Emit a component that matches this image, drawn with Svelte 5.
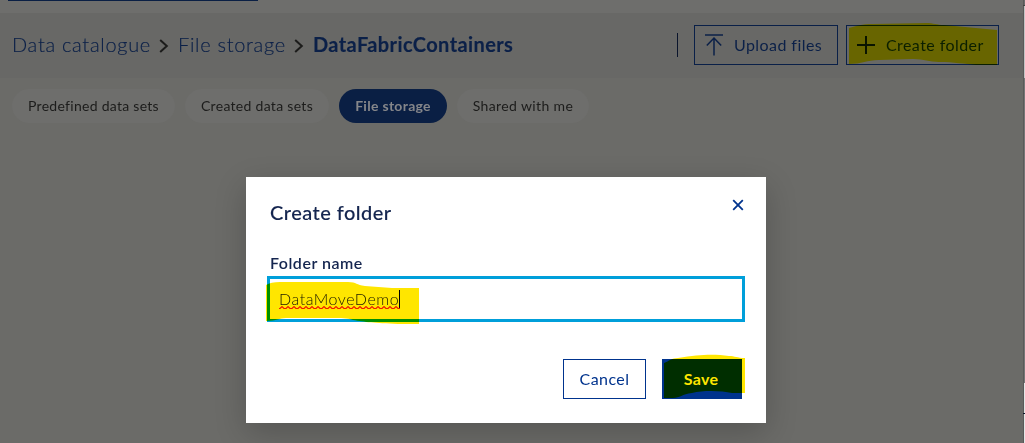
<script lang="ts">
  const tabs = [
    { label: 'Predefined data sets', width: 163, ls: 0.28 },
    { label: 'Created data sets', width: 144, ls: 0.3 },
    { label: 'File storage', width: 108, ls: 0.3, active: true },
    { label: 'Shared with me', width: 132, ls: 0.38 },
  ];
  let folder = $state('DataMoveDemo');
</script>

<div class="page">
  <div class="top"><div class="topline"></div></div>
  <header>
    <nav>
      <span class="c1">Data catalogue</span>
      <svg class="chev" width="10" height="16" viewBox="0 0 10 16"><path d="M1.2 2 7.8 8 1.2 14" /></svg>
      <span class="c2">File storage</span>
      <svg class="chev" width="10" height="16" viewBox="0 0 10 16"><path d="M1.2 2 7.8 8 1.2 14" /></svg>
      <span class="c3">DataFabricContainers</span>
    </nav>
    <div class="actions">
      <i class="sep"></i>
      <div class="btn upload">
        <svg width="18" height="22" viewBox="0 0 18 22"><path d="M0 1H18M9 3.5V21.5M1.8 11.5 9 4 16.2 11.5" /></svg>
        <span>Upload files</span>
      </div>
      <div class="btn create">
        <svg width="18" height="18" viewBox="0 0 18 18"><path d="M0 9H18M9 0V18" /></svg>
        <span>Create folder</span>
        <svg class="mark m1" width="150" height="44" viewBox="0 0 150 44"><path d="M0 5C8 3 12 1 24 1L77 0C85 0 88 2 95 2L148 7V42H127C115 41 105 39 90 39C80 39 75 36 64 36L30 37C18 37 13 41 0 41Z" /></svg>
      </div>
    </div>
  </header>
  <div class="tabs">
    {#each tabs as t}
      <div class="tab" class:active={t.active} style="width:{t.width}px;letter-spacing:{t.ls}px">{t.label}</div>
    {/each}
  </div>
  <div class="edge"><i></i><b></b></div>
  <div class="modal">
    <div class="head">
      <h1>Create folder</h1>
      <svg class="close" width="12" height="12" viewBox="0 0 12 12"><path d="M1.2 1.2 10.8 10.8M10.8 1.2 1.2 10.8" /></svg>
    </div>
    <div class="label"><span>Folder name</span></div>
    <div class="field">
      <span class="value">{folder}<svg class="wave" width="121" height="3" viewBox="0 0 121 3"><defs><pattern id="w" width="6" height="3" patternUnits="userSpaceOnUse"><path d="M0 2.5 1 2.5 3 .6 5 2.5 6 2.5" /></pattern></defs><rect width="121" height="3" fill="url(#w)" /></svg></span><i class="caret"></i>
      <svg class="mark m2" width="153" height="42" viewBox="0 0 153 42"><path d="M0 3C3 1 8 0 14 0H82C91 0 90 3 99 4L126 6H153V42H132C108 41 99 40 87 38C81 36 75 36 66 36H20C13 36 11 39 0 39Z" /></svg>
    </div>
    <div class="foot">
      <div class="mb cancel"><span>Cancel</span></div>
      <div class="mb save"><span>Save</span>
        <svg class="mark m3" width="82" height="44" viewBox="0 0 82 44"><path d="M1 8C6 6 9 3 15 3C38-1 52-1 66 1C72 1 74 3 82 3V38H69C59 36 42 35 29 38C19 39 17 43 10 43H1Z" /></svg>
      </div>
    </div>
  </div>
</div>

<style>
  :global(body) { margin: 0; overflow: hidden; }
  .page { width: 1025px; height: 443px; box-sizing: border-box; position: relative; overflow: hidden; background: #6b6b68; font-family: Lato, sans-serif; white-space: nowrap; }
  svg { fill: none; display: block; flex: none; }
  .top { height: 13px; background: #6e6e6c; padding-left: 8px; }
  .topline { width: 250px; height: 1px; background: #0a1f44; }
  header { height: 65px; background: #686866; display: flex; justify-content: space-between; padding: 0 26px 0 12px; box-sizing: border-box; }
  nav { display: flex; align-items: center; font-size: 20px; color: #0b2048; font-weight: 300; }
  nav span { line-height: 24px; height: 24px; padding-bottom: 3px; -webkit-text-stroke: .15px #0b2048; }
  .c1 { width: 147px; letter-spacing: .7px; }
  .c2 { width: 116px; letter-spacing: .7px; }
  .c3 { font-weight: 700; letter-spacing: .4px; }
  .chev { stroke: #1c1c1b; stroke-width: 2; }
  .c2, .c3 { margin-left: 9px; }
  .actions { display: flex; padding-top: 12px; }
  .sep { width: 1px; height: 24px; margin: 8px 16px 0 0; background: #0a142c; }
  .btn { height: 40px; box-sizing: border-box; border: 1px solid #0a2048; display: flex; align-items: center; color: #0b2048; font-size: 16px; position: relative; }
  .btn path { stroke: #0b2048; stroke-width: 1.5; }
  .btn span { margin-left: 11px; letter-spacing: .43px; padding-bottom: 2px; }
  .upload { width: 144px; margin-right: 8px; padding-left: 10px; }
  .create { width: 153px; padding-left: 10px; }
  .create > svg:first-child path { stroke-width: 2; stroke: #0a142c; }
  .mark { position: absolute; mix-blend-mode: multiply; overflow: visible; }
  .mark path { fill: #ffe600; stroke: none; }
  .btn .mark path { fill: #fff800; stroke: none; }
  .btn .mark { mix-blend-mode: multiply; }
  .m1 { left: 2px; top: -3px; }
  .tabs { display: flex; gap: 10px; padding: 11px 12px; }
  .tab { height: 34px; box-sizing: border-box; padding-bottom: 2px; border-radius: 17px; background: #6e6e6c; display: flex; align-items: center; justify-content: center; font-size: 14px; color: #1c1c1b; }
  .active { background: #0a1f44; color: #85868a; font-weight: 700; }
  .edge { position: absolute; right: 0; top: 0; width: 2px; height: 443px; background: linear-gradient(90deg, #5a5a59 50%, transparent 50%), linear-gradient(#6e6e6e 0 5px, #c4c4c4 5px 78px, #777 78px 383px, #e6e6e6 383px); }
  .edge i { position: absolute; top: 5px; right: 0; width: 2px; height: 1px; background: #444; }
  .edge b { position: absolute; top: 413px; right: 0; width: 2px; height: 1px; background: #111a2c; }
  .modal { position: absolute; left: 246px; top: 177px; width: 520px; height: 246px; box-sizing: border-box; background: #fff; padding: 22px 21px 0; box-shadow: 0 10px 30px rgba(0,0,0,.2); color: #14254f; }
  .head { display: flex; justify-content: space-between; height: 54px; }
  h1 { margin: -1px 0 0 3px; font-size: 20px; line-height: 28px; font-weight: 500; letter-spacing: .47px; -webkit-text-stroke: .12px #14254f; }
  .close { stroke: #00338d; stroke-width: 1.8; margin-right: 1px; }
  .label { margin-left: 3px; height: 23px; line-height: 19px; font-size: 16px; font-weight: 600; letter-spacing: .5px; }
  .field { width: 478px; height: 46px; box-sizing: border-box; border: 3px solid #009fda; position: relative; padding-left: 9px; display: flex; align-items: center; }
  .value { position: relative; top: -1px; width: 120px; font-size: 16px; font-weight: 300; color: #222; letter-spacing: .53px; }
  .wave { position: absolute; left: 0; bottom: -1px; }
  .wave path { stroke: #f01919; stroke-width: 1.2; }
  .caret { width: 1px; height: 19px; background: #000; }
  .m2 { left: -4px; top: 3px; }
  .foot { display: flex; justify-content: flex-end; gap: 16px; margin: 37px 3px 0 0; }
  .mb { height: 40px; box-sizing: border-box; border: 1px solid #00338d; padding-bottom: 2px; display: flex; align-items: center; justify-content: center; font-size: 16px; color: #00338d; position: relative; }
  .cancel { width: 83px; letter-spacing: .45px; }
  .save { width: 80px; background: #00338d; color: #fff; font-weight: 700; letter-spacing: .3px; padding-right: 2px; }
  .m3 { left: 0; top: -5px; }
</style>
